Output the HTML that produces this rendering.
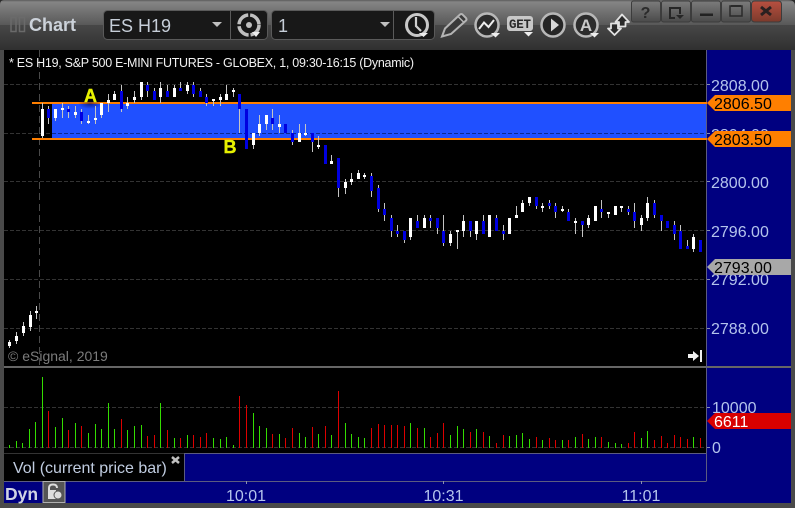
<!DOCTYPE html>
<html><head><meta charset="utf-8"><title>Chart</title>
<style>
html,body{margin:0;padding:0;background:#4a4a4a;width:795px;height:508px;overflow:hidden}
svg{display:block;font-family:"Liberation Sans",sans-serif}
.ax{font-size:16px;fill:#b4c4ec}
.tg{font-size:16px;fill:#000}
.c{shape-rendering:crispEdges;fill:none}
</style></head><body>
<svg width="795" height="508" viewBox="0 0 795 508" xmlns="http://www.w3.org/2000/svg">
<defs>
<linearGradient id="hd" x1="0" y1="0" x2="0" y2="1"><stop offset="0" stop-color="#5c5c5c"/><stop offset=".04" stop-color="#858585"/><stop offset=".5" stop-color="#585858"/><stop offset=".5" stop-color="#474747"/><stop offset="1" stop-color="#303030"/></linearGradient>
<linearGradient id="bt" x1="0" y1="0" x2="0" y2="1"><stop offset="0" stop-color="#7c7c7c"/><stop offset="1" stop-color="#4a4a4a"/></linearGradient>
<linearGradient id="rd" x1="0" y1="0" x2="0" y2="1"><stop offset="0" stop-color="#b85040"/><stop offset="1" stop-color="#7c3a2c"/></linearGradient>
<radialGradient id="sh"><stop offset="0" stop-color="#000040" stop-opacity=".55"/><stop offset="1" stop-color="#000040" stop-opacity="0"/></radialGradient>
</defs>
<rect width="795" height="508" fill="#4a4a4a"/>
<rect width="795" height="50" fill="url(#hd)"/>
<path d="M0 0H4Q0 0 0 5ZM795 0H788Q795 0 795 6Z" fill="#2a2a2a"/>
<!-- title -->
<g fill="none" stroke="#6a6a6a" stroke-width="1.5"><rect x="11" y="17.5" width="5" height="14"/><rect x="19.5" y="17.5" width="5" height="14"/></g>
<text x="29" y="31" font-size="18" font-weight="bold" fill="#ccd2da">Chart</text>
<!-- inputs -->
<rect x="103.5" y="10.5" width="164" height="29" rx="4" fill="#181818" stroke="#5a5a5a"/>
<path d="M230.5 11V39" stroke="#5a5a5a"/>
<text x="109" y="32" font-size="18" fill="#c6ced8">ES H19</text>
<path d="M212 22H222L217 27Z" fill="#c0c0c0"/>
<rect x="271.5" y="10.5" width="163" height="29" rx="4" fill="#181818" stroke="#5a5a5a"/>
<path d="M393.5 11V39" stroke="#5a5a5a"/>
<text x="278" y="32" font-size="18" fill="#c6ced8">1</text>
<path d="M380 22H390L385 27Z" fill="#c0c0c0"/>
<!-- gear -->
<circle cx="249" cy="25" r="10" fill="none" stroke="#c0c0c0" stroke-width="3.5" stroke-dasharray="14 2 14 2 14 2 14 1"/>
<circle cx="249" cy="25" r="3" fill="#c0c0c0"/>
<path d="M252 32H260L256 37Z" fill="#eee"/>
<!-- clock -->
<circle cx="417" cy="25" r="10.5" fill="none" stroke="#c8c8c8" stroke-width="3"/>
<path d="M416 17V26L421 31" fill="none" stroke="#d0d0d0" stroke-width="2.2"/>
<path d="M419 33H428L423.500 37Z" fill="#eee"/>
<!-- pencil -->
<path d="M442 36.500L445 28.500L460 14.500Q461 13.500 462.500 14.500L466 18Q467 19.500 466 20.500L451 34Z" fill="#3a3a3a" stroke="#b4b4b4" stroke-width="2"/>
<path d="M458 16.500L464 22.500" stroke="#b4b4b4" stroke-width="1.500"/>
<!-- chart -->
<circle cx="487" cy="25" r="11.500" fill="#2c2c2c" stroke="#b8b8b8" stroke-width="2.500"/>
<path d="M479 29L484 22.500L488.500 27L494 20" fill="none" stroke="#eee" stroke-width="2"/>
<path d="M491 33H500L495.500 37.500Z" fill="#eee"/>
<!-- get -->
<rect x="507" y="16" width="26" height="15" rx="3" fill="#c8c8c8"/>
<text x="509" y="28" font-size="12.500" font-weight="bold" font-family="Liberation Mono" fill="#2a2a2a" textLength="22">GET</text>
<path d="M524 32H533L528.500 36.500Z" fill="#eee"/>
<!-- play -->
<circle cx="553" cy="25" r="11.500" fill="#262626" stroke="#b8b8b8" stroke-width="2.500"/>
<path d="M551 18.500L559 25L551 31.500Z" fill="#d8d8d8"/>
<!-- A -->
<circle cx="586" cy="25" r="11.500" fill="#2c2c2c" stroke="#b8b8b8" stroke-width="2.500"/>
<text x="586" y="31" font-size="17" font-weight="bold" text-anchor="middle" fill="#c8c8c8">A</text>
<path d="M590 33H599L594.500 37.500Z" fill="#eee"/>
<!-- arrows -->
<g fill="#2a2a2a" stroke="#e2e2e2" stroke-width="1.800" stroke-linejoin="round">
<path d="M622 14.500L629 22H625.500V26.500H619V22H615.500Z"/>
<path d="M614.500 35L608 28.500H611V23.500H618V28.500H621Z"/>
</g>
<!-- window buttons -->
<g stroke="#3c3c3c" stroke-width="1">
<rect x="631.500" y="1" width="29" height="21" rx="2" fill="url(#bt)"/>
<rect x="661.500" y="1" width="29" height="21" rx="2" fill="url(#bt)"/>
<rect x="691.500" y="1" width="29" height="21" rx="2" fill="url(#bt)"/>
<rect x="721.500" y="1" width="29" height="21" rx="2" fill="url(#bt)"/>
<rect x="751.500" y="1" width="30" height="21" rx="3" fill="url(#rd)"/>
</g>
<text x="645.500" y="18" font-size="16" font-weight="bold" text-anchor="middle" fill="#2a2a2a">?</text>
<path d="M680 14V8H670V18H675" fill="none" stroke="#262626" stroke-width="2"/>
<path d="M676 15H684L680 19Z" fill="#262626"/>
<rect x="700" y="13.500" width="13" height="2.500" fill="#222"/>
<rect x="730" y="6" width="12" height="10" fill="none" stroke="#2a2a2a" stroke-width="1.500"/>
<path d="M731 6H741" stroke="#2a2a2a" stroke-width="2"/>
<path d="M761 7L771 15M771 7L761 15" stroke="#2a2020" stroke-width="3"/>

<!-- panes -->
<rect x="4" y="50" width="702" height="316" fill="#000"/>
<rect x="4" y="368" width="702" height="85" fill="#000"/>
<rect x="707" y="50" width="84" height="453" fill="#000080"/>
<rect x="4" y="453" width="180" height="28" fill="#000"/>
<rect x="184" y="453" width="523" height="28" fill="#000080"/>
<rect x="4" y="481" width="703" height="22" fill="#000080"/>
<rect x="4" y="366" width="787" height="2" fill="#666"/>
<g class="c">
<path d="M706.500 50V481M184 453.500H706.500M4 481.500H706.500M184.500 453V481" stroke="#5c5c80"/>
<path d="M4 453.500H184" stroke="#333"/>
<path d="M246.500 481V484M443.500 481V484M641.500 481V484" stroke="#8890b0"/>
</g>
<!-- grid -->
<g class="c" stroke="#333" stroke-dasharray="4 2">
<path d="M4 84.500H706M4 181.500H706M4 230.500H706M4 279.500H706M4 328.500H706M4 407.500H706M4 447.500H706M4 133.500H52"/>
</g>
<path class="c" d="M39.500 50V366" stroke="#4a4a4a" stroke-dasharray="7 4"/>
<!-- band -->
<rect x="52" y="104" width="654" height="34" fill="#2050ff"/>
<path class="c" d="M52 133.500H706" stroke="#0c2a90" stroke-dasharray="4 2"/>
<rect x="32" y="102" width="675" height="2" fill="#ff7f00"/>
<rect x="32" y="138" width="675" height="2" fill="#ff7f00"/>
<ellipse cx="90" cy="104" rx="12" ry="5" fill="url(#sh)"/>
<text x="84" y="102" font-size="18" font-weight="bold" fill="#e6f000" stroke="#e6f000" stroke-width=".4">A</text>
<text x="223.500" y="153" font-size="18" font-weight="bold" fill="#e6f000" stroke="#e6f000" stroke-width=".4">B</text>
<!-- wicks -->
<path class="c" stroke="#c4c4c4" d="M9.500 340V348M16.500 332V344M23.500 322V336M30.500 311V331M36.500 306V319M42.500 103V138M48.500 106V124M55.500 109V121M62.500 103V118M68.500 106V118M75.500 106V118M81.500 109V124M88.500 115V124M95.500 106V124M101.500 103V118M108.500 94V112M114.500 91V100M121.500 85V112M127.500 97V109M134.500 91V103M141.500 82V100M147.500 82V97M154.500 88V100M160.500 82V103M167.500 85V97M174.500 85V97M180.500 82V91M187.500 82V94M193.500 82V97M200.500 88V97M206.500 94V106M213.500 99V106M220.500 94V106M226.500 85V100M233.500 88V97M239.500 94V133M253.500 133V149M259.500 115V136M266.500 115V130M272.500 109V130M279.500 115V133M292.500 130V145M299.500 124V142M305.500 124V136M312.500 133V152M318.500 136V149M331.500 155V164M338.500 158V197M345.500 179V194M351.500 173V185M358.500 170V179M364.500 173V179M371.500 173V197M378.500 185V212M384.500 203V221M391.500 215V237M397.500 225V237M404.500 231V243M410.500 218V240M417.500 215V228M424.500 215V228M430.500 215V228M437.500 218V234M443.500 215V246M450.500 231V246M457.500 230V249M463.500 215V237M470.500 221V237M476.500 221V240M483.500 215V234M496.500 215V231M503.500 225V240M516.500 206V218M522.500 200V212M529.500 197V206M536.500 197V209M542.500 203V212M549.500 200V209M555.500 203V218M562.500 206V212M568.500 209V221M575.500 218V234M582.500 221V237M588.500 215V228M601.500 200V218M608.500 212V218M621.500 206V212M628.500 206V215M634.500 203V228M641.500 215V231M647.500 197V221M654.500 200V218M661.500 215V231M674.500 221V240M680.500 225V249M687.500 240V249M693.500 234V252"/>
<!-- white bodies -->
<path class="c" stroke="#fff" stroke-width="3" d="M9.500 342V346M16.500 336V341M23.500 326V333M30.500 315V327M36.500 311V313M42.500 109V136M55.500 109V118M62.500 108V110M75.500 112V115M88.500 121V123M95.500 118V120M101.500 103V115M108.500 100V103M114.500 94V100M127.500 103V106M134.500 97V100M141.500 82V97M160.500 88V97M174.500 88V97M187.500 85V91M213.500 99V101M220.500 97V100M226.500 94V100M233.500 90V92M253.500 133V145M259.500 124V133M266.500 115V124M279.500 124V127M299.500 133V142M305.500 133V135M318.500 145V147M331.500 161V164M345.500 182V188M351.500 179V182M358.500 173V179M364.500 175V177M410.500 218V237M424.500 218V228M450.500 234V243M457.500 230V232M463.500 221V231M476.500 221V234M489.500 215V237M509.500 218V234M516.500 215V218M522.500 203V212M529.500 197V203M542.500 206V208M562.500 209V211M575.500 221V223M588.500 218V225M595.500 206V221M608.500 212V214M615.500 206V215M621.500 206V208M641.500 218V225M647.500 203V218M693.500 237V249"/>
<!-- blue bodies -->
<path class="c" stroke="#0000e0" stroke-width="3" d="M48.500 109V118M68.500 109V112M81.500 112V121M121.500 91V109M147.500 85V91M154.500 91V100M167.500 91V97M180.500 88V91M193.500 85V94M200.500 91V97M206.500 97V103M239.500 94V109M246.500 109V149M272.500 118V124M285.500 124V133M292.500 133V142M312.500 133V142M325.500 145V164M338.500 158V188M371.500 176V191M378.500 188V209M384.500 209V215M391.500 218V231M397.500 231V234M404.500 231V240M417.500 221V228M430.500 218V221M437.500 218V228M443.500 231V243M470.500 221V231M483.500 221V234M496.500 218V231M503.500 231V234M536.500 197V206M549.500 203V206M555.500 206V212M568.500 212V221M582.500 221V225M601.500 209V212M628.500 209V212M634.500 212V221M654.500 203V215M661.500 215V221M667.500 221V228M674.500 225V234M680.500 231V249M687.500 246V249M700.500 240V252"/>
<!-- volume -->
<path class="c" stroke="#33dd00" d="M9.500 445V448M16.500 441V448M22.500 443V448M29.500 429V448M35.500 422V448M42.500 377V448M55.500 427V448M62.500 418V448M75.500 423V448M88.500 433V448M95.500 424V448M101.500 429V448M108.500 403V448M114.500 429V448M127.500 430V448M134.500 426V448M141.500 425V448M160.500 403V448M174.500 438V448M187.500 435V448M213.500 438V448M220.500 439V448M226.500 437V448M233.500 445V448M253.500 413V448M259.500 426V448M266.500 428V448M279.500 434V448M299.500 433V448M305.500 437V448M318.500 434V448M331.500 435V448M345.500 423V448M351.500 434V448M358.500 437V448M364.500 438V448M410.500 423V448M424.500 428V448M450.500 435V448M457.500 426V448M463.500 429V448M476.500 429V448M489.500 436V448M509.500 436V448M516.500 435V448M522.500 433V448M529.500 439V448M542.500 440V448M562.500 440V448M575.500 437V448M588.500 439V448M595.500 437V448M608.500 442V448M615.500 443V448M621.500 444V448M641.500 438V448M647.500 431V448M693.500 437V448"/>
<path class="c" stroke="#dd0000" d="M48.500 411V448M68.500 430V448M81.500 426V448M121.500 419V448M147.500 436V448M154.500 435V448M167.500 430V448M180.500 438V448M193.500 435V448M200.500 437V448M206.500 433V448M239.500 396V448M246.500 405V448M272.500 434V448M285.500 438V448M292.500 428V448M312.500 427V448M325.500 426V448M338.500 391V448M371.500 428V448M378.500 424V448M384.500 425V448M391.500 425V448M397.500 425V448M404.500 426V448M417.500 428V448M430.500 437V448M437.500 433V448M443.500 423V448M470.500 432V448M483.500 432V448M496.500 443V448M503.500 435V448M536.500 437V448M549.500 438V448M555.500 440V448M568.500 440V448M582.500 434V448M601.500 437V448M628.500 443V448M634.500 432V448M654.500 440V448M661.500 436V448M667.500 443V448M674.500 435V448M680.500 437V448M687.500 439V448M700.500 438V448"/>
<!-- text -->
<text x="9" y="67" font-size="12.500" fill="#f2f2f2" textLength="405">* ES H19, S&amp;P 500 E-MINI FUTURES - GLOBEX, 1, 09:30-16:15 (Dynamic)</text>
<text x="8" y="361" font-size="14" fill="#7c7c7c">© eSignal, 2019</text>
<path d="M688 354H693V351L699 356L693 361V358H688Z" fill="#f0f0f0"/>
<rect x="700" y="350" width="2" height="12" fill="#f0f0f0"/>
<!-- axis -->
<path class="c" d="M707 84.500H710M707 133.500H710M707 181.500H710M707 230.500H710M707 279.500H710M707 328.500H710M707 407.500H710M707 447.500H710" stroke="#8890b0"/>
<text class="ax" x="711" y="91">2808.00</text>
<text class="ax" x="711" y="140">2804.00</text>
<text class="ax" x="711" y="188">2800.00</text>
<text class="ax" x="711" y="237">2796.00</text>
<text class="ax" x="711" y="285">2792.00</text>
<text class="ax" x="711" y="334">2788.00</text>
<path d="M707 103L715 95H791V111H715Z" fill="#ff7f00"/>
<text class="tg" x="714" y="109">2806.50</text>
<path d="M707 139L715 131H791V147H715Z" fill="#ff7f00"/>
<text class="tg" x="714" y="145">2803.50</text>
<path d="M707 267L715 259H791V275H715Z" fill="#a8a8a8"/>
<text class="tg" x="714" y="273">2793.00</text>
<text class="ax" x="712" y="413">10000</text>
<text class="ax" x="712" y="453">0</text>
<path d="M707 421L715 413H791V429H715Z" fill="#d80000"/>
<text x="714" y="427" font-size="16" fill="#fff">6611</text>
<text class="ax" x="246" y="501" text-anchor="middle">10:01</text>
<text class="ax" x="443.500" y="501" text-anchor="middle">10:31</text>
<text class="ax" x="641" y="501" text-anchor="middle">11:01</text>
<!-- legend -->
<text x="13" y="473" font-size="16" fill="#c0cce0">Vol (current price bar)</text>
<path d="M172 457L179 463M179 457L172 463" stroke="#c0c0c0" stroke-width="2.500"/>
<text x="5" y="500" font-size="17.500" font-weight="bold" fill="#d0d4e4">Dyn</text>
<rect x="43" y="481.500" width="22" height="21" fill="#555" stroke="#b0b0b0"/>
<path d="M49 496V488Q49 484.500 53 484.500T57 488" fill="none" stroke="#ddd" stroke-width="2"/>
<rect x="48" y="490" width="8" height="9" fill="#ddd"/>
<circle cx="58" cy="495" r="4" fill="#ddd" stroke="#555"/>
</svg>
</body></html>
